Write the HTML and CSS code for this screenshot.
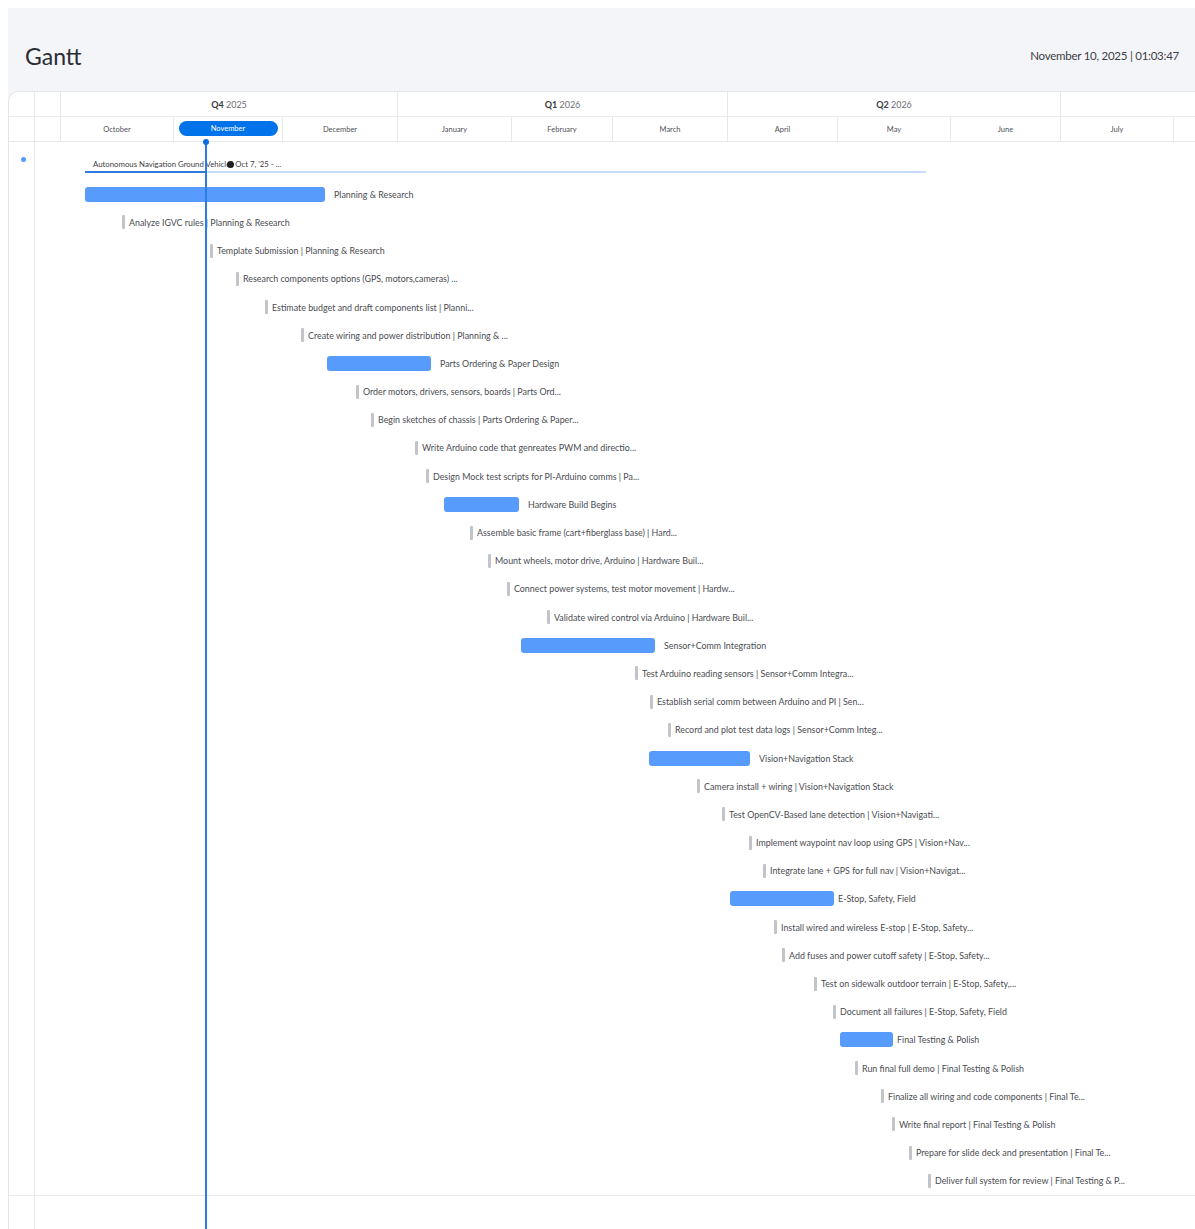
FILE: index.html
```html
<!DOCTYPE html>
<html lang="en">
<head>
<meta charset="utf-8">
<title>Gantt</title>
<link rel="stylesheet" href="styles.css">
</head>
<body>
<div class="board">
  <header class="board-header">
    <h1 class="board-title">Gantt</h1>
    <div class="board-clock">November 10, 2025 | 01:03:47</div>
  </header>

  <section class="gantt">
    <div class="scale">
      <div class="cell quarter"></div>
      <div class="cell quarter"></div>
      <div class="cell quarter span3"><b>Q4</b>&nbsp;2025</div>
      <div class="cell quarter span3"><b>Q1</b>&nbsp;2026</div>
      <div class="cell quarter span3"><b>Q2</b>&nbsp;2026</div>
      <div class="cell quarter span3"></div>

      <div class="cell month"></div>
      <div class="cell month"></div>
      <div class="cell month">October</div>
      <div class="cell month"><span class="month-current">November</span></div>
      <div class="cell month">December</div>
      <div class="cell month">January</div>
      <div class="cell month">February</div>
      <div class="cell month">March</div>
      <div class="cell month">April</div>
      <div class="cell month">May</div>
      <div class="cell month">June</div>
      <div class="cell month">July</div>
      <div class="cell month"></div>
      <div class="cell month"></div>
    </div>

    <div class="chart">
      <div class="gutter"><span class="group-dot"></span></div>
      <div class="rows">
        <div class="row">
          <div class="project" style="margin-left:24px;width:841px">
            <div class="project-label">Autonomous Navigation Ground Vehicle<span class="project-pin"></span>Oct 7, '25 - ...</div>
            <div class="project-track"><div class="project-progress" style="width:120px"></div></div>
          </div>
        </div>

        <div class="row"><div class="bar" style="margin-left:24px;width:240px"></div><span class="bar-label">Planning &amp; Research</span></div>
        <div class="row"><span class="tick" style="margin-left:61px"></span><span class="tick-label">Analyze IGVC rules | Planning &amp; Research</span></div>
        <div class="row"><span class="tick" style="margin-left:149px"></span><span class="tick-label">Template Submission | Planning &amp; Research</span></div>
        <div class="row"><span class="tick" style="margin-left:175px"></span><span class="tick-label">Research components options (GPS, motors,cameras) ...</span></div>
        <div class="row"><span class="tick" style="margin-left:204px"></span><span class="tick-label">Estimate budget and draft components list | Planni...</span></div>
        <div class="row"><span class="tick" style="margin-left:240px"></span><span class="tick-label">Create wiring and power distribution | Planning &amp; ...</span></div>

        <div class="row"><div class="bar" style="margin-left:266px;width:104px"></div><span class="bar-label">Parts Ordering &amp; Paper Design</span></div>
        <div class="row"><span class="tick" style="margin-left:295px"></span><span class="tick-label">Order motors, drivers, sensors, boards | Parts Ord...</span></div>
        <div class="row"><span class="tick" style="margin-left:310px"></span><span class="tick-label">Begin sketches of chassis | Parts Ordering &amp; Paper...</span></div>
        <div class="row"><span class="tick" style="margin-left:354px"></span><span class="tick-label">Write Arduino code that genreates PWM and directio...</span></div>
        <div class="row"><span class="tick" style="margin-left:365px"></span><span class="tick-label">Design Mock test scripts for PI-Arduino comms | Pa...</span></div>

        <div class="row"><div class="bar" style="margin-left:383px;width:75px"></div><span class="bar-label">Hardware Build Begins</span></div>
        <div class="row"><span class="tick" style="margin-left:409px"></span><span class="tick-label">Assemble basic frame (cart+fiberglass base) | Hard...</span></div>
        <div class="row"><span class="tick" style="margin-left:427px"></span><span class="tick-label">Mount wheels, motor drive, Arduino | Hardware Buil...</span></div>
        <div class="row"><span class="tick" style="margin-left:446px"></span><span class="tick-label">Connect power systems, test motor movement | Hardw...</span></div>
        <div class="row"><span class="tick" style="margin-left:486px"></span><span class="tick-label">Validate wired control via Arduino | Hardware Buil...</span></div>

        <div class="row"><div class="bar" style="margin-left:460px;width:134px"></div><span class="bar-label">Sensor+Comm Integration</span></div>
        <div class="row"><span class="tick" style="margin-left:574px"></span><span class="tick-label">Test Arduino reading sensors | Sensor+Comm Integra...</span></div>
        <div class="row"><span class="tick" style="margin-left:589px"></span><span class="tick-label">Establish serial comm between Arduino and PI | Sen...</span></div>
        <div class="row"><span class="tick" style="margin-left:607px"></span><span class="tick-label">Record and plot test data logs | Sensor+Comm Integ...</span></div>

        <div class="row"><div class="bar" style="margin-left:588px;width:101px"></div><span class="bar-label">Vision+Navigation Stack</span></div>
        <div class="row"><span class="tick" style="margin-left:636px"></span><span class="tick-label">Camera install + wiring | Vision+Navigation Stack</span></div>
        <div class="row"><span class="tick" style="margin-left:661px"></span><span class="tick-label">Test OpenCV-Based lane detection | Vision+Navigati...</span></div>
        <div class="row"><span class="tick" style="margin-left:688px"></span><span class="tick-label">Implement waypoint nav loop using GPS | Vision+Nav...</span></div>
        <div class="row"><span class="tick" style="margin-left:702px"></span><span class="tick-label">Integrate lane + GPS for full nav | Vision+Navigat...</span></div>

        <div class="row"><div class="bar" style="margin-left:669px;width:104px"></div><span class="bar-label bar-label-tight">E-Stop, Safety, Field</span></div>
        <div class="row"><span class="tick" style="margin-left:713px"></span><span class="tick-label">Install wired and wireless E-stop | E-Stop, Safety...</span></div>
        <div class="row"><span class="tick" style="margin-left:721px"></span><span class="tick-label">Add fuses and power cutoff safety | E-Stop, Safety...</span></div>
        <div class="row"><span class="tick" style="margin-left:753px"></span><span class="tick-label">Test on sidewalk outdoor terrain | E-Stop, Safety,...</span></div>
        <div class="row"><span class="tick" style="margin-left:772px"></span><span class="tick-label">Document all failures | E-Stop, Safety, Field</span></div>

        <div class="row"><div class="bar" style="margin-left:779px;width:53px"></div><span class="bar-label bar-label-tight">Final Testing &amp; Polish</span></div>
        <div class="row"><span class="tick" style="margin-left:794px"></span><span class="tick-label">Run final full demo | Final Testing &amp; Polish</span></div>
        <div class="row"><span class="tick" style="margin-left:820px"></span><span class="tick-label">Finalize all wiring and code components | Final Te...</span></div>
        <div class="row"><span class="tick" style="margin-left:831px"></span><span class="tick-label">Write final report | Final Testing &amp; Polish</span></div>
        <div class="row"><span class="tick" style="margin-left:848px"></span><span class="tick-label">Prepare for slide deck and presentation | Final Te...</span></div>
        <div class="row"><span class="tick" style="margin-left:867px"></span><span class="tick-label">Deliver full system for review | Final Testing &amp; P...</span></div>
      </div>
    </div>

    <div class="chart-rest">
      <div class="gutter"></div>
      <div></div>
    </div>

    <div class="today-line"></div>
  </section>
</div>
</body>
</html>
```

FILE: styles.css
```css
* {
  box-sizing: border-box;
}

html,
body {
  height: 100%;
  overflow: hidden;
}

body {
  margin: 8px 0 0 8px;
  background: #ffffff;
  font-family: "Lato", "Roboto", sans-serif;
  color: #323338;
}

/* page shell */
.board {
  height: calc(100vh - 8px);
  background: #f4f5f9;
  display: flex;
  flex-direction: column;
  overflow: hidden;
}

.board-header {
  height: 83px;
  flex: none;
  padding: 12px 16px 0 17px;
  display: flex;
  align-items: center;
  justify-content: space-between;
}

.board-title {
  margin: 0;
  font-size: 23px;
  font-weight: 400;
  color: #2b2c31;
}

.board-clock {
  font-size: 11.5px;
  color: #3d3e44;
  letter-spacing: -0.25px;
}

/* gantt card */
.gantt {
  position: relative;
  flex: 1;
  display: flex;
  flex-direction: column;
  background: #ffffff;
  border-left: 1px solid #e3e5ec;
  border-top: 1px solid #e3e5ec;
  border-top-left-radius: 10px;
  overflow: hidden;
}

.scale {
  display: grid;
  grid-template-columns: 26px 26px 113px 109px 115px 114px 101px 115px 110px 113px 110px 113px 113px 110px;
  width: max-content;
  flex: none;
}

.cell {
  display: flex;
  align-items: center;
  justify-content: center;
  border-right: 1px solid #e6e8ef;
  border-bottom: 1px solid #e6e8ef;
  white-space: nowrap;
}

.quarter {
  height: 25px;
  font-size: 9px;
  color: #6d6e75;
}

.quarter b {
  font-weight: 700;
  color: #3a3b40;
}

.span3 {
  grid-column: span 3;
}

.month {
  height: 25px;
  font-size: 7.5px;
  color: #505157;
}

.month-current {
  width: 99px;
  height: 15px;
  border-radius: 8px;
  background: #0073ea;
  color: #ffffff;
  display: flex;
  align-items: center;
  justify-content: center;
  margin-top: -2px;
}

/* chart body */
.chart {
  display: grid;
  grid-template-columns: 26px 1fr;
  border-bottom: 1px solid #e6e8ef;
  flex: none;
}

.chart-rest {
  display: grid;
  grid-template-columns: 26px 1fr;
  flex: 1;
}

.gutter {
  border-right: 1px solid #e6e8ef;
}

.group-dot {
  display: block;
  width: 5px;
  height: 5px;
  border-radius: 50%;
  background: #579bfc;
  margin: 15px 0 0 12px;
}

.rows {
  padding: 10px 0 0 26px;
}

.row {
  height: 28.2px;
  display: flex;
  align-items: center;
  white-space: nowrap;
}

.project {
  display: flex;
  flex-direction: column;
}

.project-label {
  font-size: 7.8px;
  line-height: 10px;
  color: #3f4046;
  padding-left: 8px;
}

.project-pin {
  display: inline-block;
  width: 7px;
  height: 7px;
  border-radius: 50%;
  background: #1e1f24;
  margin: 0 1px 0 -3px;
  vertical-align: -0.5px;
}

.project-track {
  height: 2px;
  margin-top: 2px;
  background: #c9dcf7;
}

.project-progress {
  height: 100%;
  background: #2f7be3;
}

.bar {
  height: 15px;
  border-radius: 3px;
  background: #579bfc;
  flex: none;
}

.bar-label {
  margin-left: 9px;
  font-size: 8.9px;
  color: #4b4c52;
}

.bar-label-tight {
  margin-left: 4px;
}

.tick {
  width: 3px;
  height: 14px;
  border-radius: 1px;
  background: #c3c4c9;
  flex: none;
}

.tick-label {
  margin-left: 4px;
  font-size: 8.9px;
  color: #4b4c52;
}

/* current-date marker */
.today-line {
  position: absolute;
  left: 196px;
  top: 49px;
  bottom: 0;
  width: 2px;
  background: #2a7de1;
}

.today-line::before {
  content: "";
  position: absolute;
  top: -2px;
  left: -2px;
  width: 6px;
  height: 6px;
  border-radius: 50%;
  background: #0b6fe0;
}
```
